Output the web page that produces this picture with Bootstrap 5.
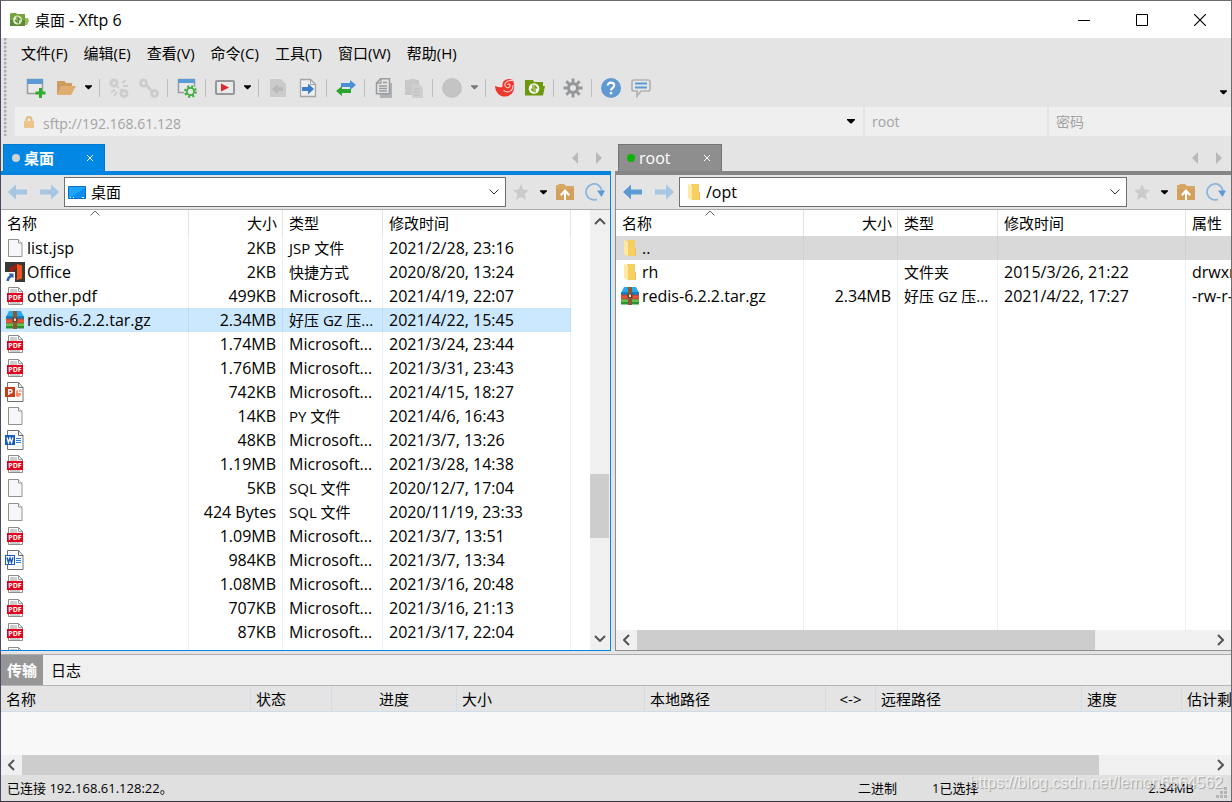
<!DOCTYPE html>
<html lang="zh-CN">
<head>
<meta charset="utf-8">
<meta name="viewport" content="width=device-width, initial-scale=1">
<title>桌面 - Xftp 6</title>
<link href="https://cdn.jsdelivr.net/npm/bootstrap@5.3.0/dist/css/bootstrap.min.css" rel="stylesheet">
<style>
body{font-family:"Open Sans","Noto Sans CJK SC",sans-serif;font-size:15px;line-height:24px;color:#000;background:#e4e4e4}
.win{height:100vh;border:1px solid #6c6b70;border-left-color:#4c4860;border-bottom-color:#38343f}
.win button,.win a{color:inherit;text-decoration:none;font-size:inherit;line-height:inherit}
.win button{border:0;background:none;padding:0}
.win svg{display:block;flex:none}
.latin{font-size:16px}
.titlebar{height:37px;background:#fff;padding-right:2px}
.capbtn{width:58px;height:37px}
.grip{width:3px;margin-left:3px;background:radial-gradient(circle at 1px 1px,#a8a8a8 1px,transparent 2px) 0 0/3px 4px}
.menu{height:30px;padding-left:6px}
.menu a{padding:0 8px}
.tb{height:39px;padding-left:14px}
.tb-btn{width:30px;height:30px}
.tb-drop{width:15px;height:30px}
.tb-sep{width:8px;height:18px;background:linear-gradient(#bdbdbd,#bdbdbd) 3px 0/1px 18px no-repeat}
.addr{height:29px;margin-left:8px;gap:2px}
.addr .cell{background:#efefef;height:29px}
.addr .cell-url{flex:1 1 0}
.addr .cell-side{width:182px;padding-left:7px}
.addr input{border:0;background:none;outline:0;color:#a3a3a3;font-size:14px;min-width:0;padding:0}
.addr input::placeholder{color:#a3a3a3}
.panes{flex:1 1 0;min-height:0;gap:4px}
.pane{min-width:0;min-height:0}
.pane-l{flex:610 1 0}
.pane-r{flex:616 1 0}
.tabs{height:35px;flex:none}
.ptab{height:27px;padding-left:8px;color:#fff}
.ptab .dot{width:8px;height:8px;border-radius:50%}
.ptab .close-x{width:28px;height:27px}
.pane-l .ptab{background:#0288e4;border:1px solid #0078cc;border-bottom:0;width:102px;margin-left:2px}
.pane-r .ptab{background:#8e8e8e;border:1px solid #747474;border-bottom:0;width:104px;margin-left:3px}
.pane-body{flex:1 1 0;min-height:0}
.pane-l .pane-body{border:1px solid #0288e4;border-left:0;border-top:4px solid #0284de}
.pane-r .pane-body{border:1px solid #8e8e8e;border-right:0;border-top:4px solid #868686}
.ptools{height:35px;flex:none;border-bottom:1px solid #adadad;padding-left:1px;background:#e4e4e4}
.ptools .tb-drop{width:14px}
.nav-btn{width:31px;height:30px}
.combo{height:30px;background:#fff;border:1px solid #707070;padding:0 2px}
.combo select{border:0;background:none;outline:0;appearance:none;padding:0;min-width:0;color:#000}
.list{flex:1 1 0;min-height:0;background:#fff}
.ftable{table-layout:fixed;border-collapse:separate;border-spacing:0;height:100%}
.ftable tr{height:24px}
.ftable th,.ftable td{font-weight:400;padding:0 6px;white-space:nowrap;overflow:hidden;border-right:1px solid #e6f1fc}
.ftable td{height:24px;font-size:16px}
.ftable td:nth-child(3){font-size:15px}
.ftable thead th{height:26px;position:relative;border-color:#e2e2e2}
.ftable tr.rest{height:100%}
.ftable .nm{padding:0 0 0 4px}
.ftable .num{text-align:right}
.ftable th.num{padding-right:5px}
.nm div{display:flex;align-items:center;gap:2px;height:24px}
.ftable td.ms{font-size:16px}
.sel td{background:#cce8ff;border-color:#bfdcf6}
.up td{background:#d9d9d9;border-color:#c8d2dc}
.sortmark{position:absolute;top:0;left:calc(50% - 5px)}
.sb{background:#f0f0f0;flex:none}
.sb-thumb{background:#cdcdcd}
.vs{width:20px;padding-right:1px}
.hs{height:20px}
.sb-end{width:21px;padding:0 7px}
.dock{border-top:1px solid #adadad;margin-top:3px}
.dtabs{height:30px;background:#f0f0f0}
.dtabs a{padding:3px 6px 3px 6px}
.dtabs .on{background:#969696;color:#fff!important;font-weight:700}
.dtable{background:#f8f8f8;border-top:1px solid #b5b5b5;height:70px}
.qtable{table-layout:fixed;border-collapse:separate;border-spacing:0;width:1280px}
.qtable th{background:#e4e4e4;font-weight:400;height:26px;padding:0 5px;white-space:nowrap;border-right:1px solid #cfdcea;border-bottom:1px solid #cfdcea}
.status{height:26px;background:#e0e0e0;font-size:13px;padding-left:6px}
.st-mode{width:74px}
.st-info{width:299px;padding-right:37px}
.wm{right:8px;bottom:7px;font:16px/22px "Liberation Sans",sans-serif;color:rgba(255,255,255,.7);text-shadow:1px 1px 1px rgba(120,120,120,.6);pointer-events:none}
.resize{right:3px;bottom:2px}
</style>
</head>
<body>
<svg width="0" height="0" class="position-absolute" aria-hidden="true">
<defs>
<symbol id="caret" viewBox="0 0 8 5"><path d="M0 0h8v1L4.500 4.500h-1L0 1z"/></symbol>
<symbol id="pdf" viewBox="0 0 20 20"><path d="M3.500 1.500h10l4 4v13h-14z" fill="#fff" stroke="#8c8c8c"/><path d="M13.500 1.500v4h4M5 4h7M5 6h7M5 17h10" fill="none" stroke="#999"/><rect x="2" y="7" width="16" height="9" fill="#e3001b"/><text x="10" y="14.200" font-family="Open Sans" font-size="7" font-weight="700" text-anchor="middle" fill="#fff">PDF</text></symbol>
<symbol id="doc" viewBox="0 0 20 20"><path d="M3.500 1.500h10l3.500 3.500v13.500H3.500z" fill="#f5f7f8" stroke="#919191"/><path d="M13.500 1.500V5H17" fill="#fff" stroke="#919191"/></symbol>
<symbol id="word" viewBox="0 0 20 20"><path d="M2.500.500h11l4.500 5v14H2.500z" fill="#fff" stroke="#707070"/><path d="M13.500.500v5H18" fill="none" stroke="#707070"/><path d="M11 8.500h5M11 10.500h5M11 12.500h5" stroke="#2b7cd3"/><rect y="5" width="10" height="10" fill="#185abd"/><path d="M2 7.500l1.500 5 1.500-4.500 1.500 4.500 1.500-5" stroke="#fff" stroke-width="1.300" fill="none"/></symbol>
<symbol id="wordo" viewBox="0 0 20 20"><path d="M2.500.500h11l4.500 5v14H2.500z" fill="#fff" stroke="#707070"/><path d="M13.500.500v5H18" fill="none" stroke="#707070"/><path d="M11 8.500h5M11 10.500h5M11 12.500h5" stroke="#2b7cd3"/><rect x=".5" y="5.500" width="9" height="9" fill="#fff" stroke="#185abd"/><path d="M2 7.500l1.500 5 1.500-4.500 1.500 4.500 1.500-5" stroke="#185abd" stroke-width="1.500" fill="none"/></symbol>
<symbol id="ppt" viewBox="0 0 20 20"><path d="M2.500.500h11l4.500 5v14H2.500z" fill="#fff" stroke="#707070"/><path d="M13.500.500v5H18" fill="none" stroke="#707070"/><path d="M11 9v5a3 3 0 0 0 5-3h-3V8z" fill="#ff8f6b"/><path d="M14 7a3 3 0 0 1 3 3h-3z" fill="#ffb59b"/><rect y="5" width="10" height="10" fill="#c43e1c"/><path d="M3.800 13V7.700h1.700a1.500 1.500 0 0 1 0 3.200H3.800" stroke="#fff" stroke-width="1.400" fill="none"/></symbol>
<symbol id="office" viewBox="0 0 20 20"><path d="M0 0h20v20H0z" fill="#3b3735"/><path d="M5 6l7-4v4L8 8v4H5z" fill="#a61c0c"/><path d="M12 2l5 1.500v13L12 18z" fill="#f0541e"/><path d="M9 15.500l3 1V18z" fill="#c5300f"/><path d="M0 10h10v10H0z" fill="#fff"/><path d="M3.500 11.500H8.500V16.500L7 15C5 16 4 17 4 19H1.500C1.500 16 3 14.500 5 13z" fill="#2c5fa5"/></symbol>
<symbol id="gz" viewBox="0 0 20 20"><path d="M4 1h12l3 6H1z" fill="#29a9e8"/><path d="M1 6h18v3H1z" fill="#1581c0"/><path d="M1 9h18v4H1z" fill="#e2573a"/><path d="M1 13h18v3H1z" fill="#63c14a"/><path d="M1 16h18v2.500H1z" fill="#2f8f38"/><path d="M1 9h18M1 13h18" stroke="#a33" stroke-width=".6"/><path d="M8 1h4v18H8z" fill="#8b5a32"/><rect x="7.500" y="7.500" width="5" height="4.500" fill="#5a4436"/><rect x="9" y="8.500" width="2" height="2.500" fill="#ffe0b0"/></symbol>
<symbol id="fold" viewBox="0 0 14 18"><path d="M4 1h8v13l1 1v2H4z" fill="#f5cf63"/><path d="M12 9h1v7h-1z" fill="#eec04f"/><path d="M1 1l4 2v14l-4-2z" fill="#ffe9a2"/></symbol>
<symbol id="back" viewBox="0 0 20 16"><path d="M0 8l8-7.500v5h11v5H8v5z"/></symbol>
<symbol id="fwd" viewBox="0 0 20 16"><path d="M20 8l-8-7.500v5H1v5h11v5z"/></symbol>
<symbol id="chev" viewBox="0 0 10 6"><path d="M.500.500L5 5 9.500.500" fill="none" stroke="#333"/></symbol>
<symbol id="star" viewBox="0 0 16 16"><path d="M8 0l2.300 5.500L16 6l-4.300 4 1.300 6-5-3.200L3 16l1.300-6L0 6l5.700-.5z" fill="#cbcbcb"/></symbol>
<symbol id="upf" viewBox="0 0 18 16"><path d="M0 1h2l1-1h5l2 2h8v14H0z" fill="#d9a765"/><path d="M0 5h18v11H0z" fill="#d3a05c"/><path d="M4 10.500L9 5l5 5.500-1.500 1.500L10 9.500V16H8V9.500L5.500 12z" fill="#fff"/></symbol>
<symbol id="refr" viewBox="0 0 20 18"><path d="M12 16.300A8 8 0 1 1 17 8" fill="none" stroke="#8cb6dd" stroke-width="1.800"/><path d="M12 7.500h8l-3.500 6.500z" fill="#5b9bd5"/></symbol>
<symbol id="close" viewBox="0 0 8 8"><path d="M1 1l6 6M7 1L1 7" stroke="#fff" fill="none"/></symbol>
<symbol id="gear" viewBox="0 0 20 20"><path d="M10 0.500v19M.500 10h19M3.300 3.300l13.400 13.400M16.700 3.300L3.300 16.700" stroke-width="2.800"/><circle cx="10" cy="10" r="6" stroke="none"/></symbol>
<symbol id="sl" viewBox="0 0 7 12"><path d="M6 1L1 6l5 5" fill="none" stroke="#555" stroke-width="2"/></symbol>
<symbol id="sr" viewBox="0 0 7 12"><path d="M1 1l5 5-5 5" fill="none" stroke="#555" stroke-width="2"/></symbol>
</defs>
</svg>

<div class="win d-flex flex-column position-relative overflow-hidden">
  <header class="titlebar d-flex align-items-center">
    <svg class="ms-2" width="22" height="16" viewBox="0 0 22 16"><path d="M1 2l1-1h5l1 1h8v12H1z" fill="#78a33c"/><path d="M1 8h15v6H1z" fill="#5d8a35"/><path d="M16 6h3l1 3-2 4h-2z" fill="#9bbd63"/><circle cx="8.500" cy="8" r="4.500" fill="#dfeccb"/><path d="M8 4.500v5.500L6 8M9.500 11.500V6l2 2" stroke="#5d8a35" stroke-width="1.200" fill="none"/></svg>
    <span class="ms-1 flex-grow-1">桌面 <span class="latin">- Xftp 6</span></span>
    <button class="capbtn d-flex align-items-center justify-content-center" aria-label="最小化"><svg width="12" height="12"><path d="M0 6.500h12" stroke="#000"/></svg></button>
    <button class="capbtn d-flex align-items-center justify-content-center" aria-label="最大化"><svg width="12" height="12"><path d="M.5.500h11v11H.500z" fill="none" stroke="#000"/></svg></button>
    <button class="capbtn d-flex align-items-center justify-content-center" aria-label="关闭"><svg width="12" height="12"><path d="M0 0l12 12M12 0L0 12" stroke="#000" stroke-width="1.200"/></svg></button>
  </header>

  <div class="d-flex">
    <div class="grip"></div>
    <div class="flex-grow-1">
      <nav class="menu d-flex align-items-center">
        <a href="#">文件(F)</a><a href="#">编辑(E)</a><a href="#">查看(V)</a><a href="#">命令(C)</a><a href="#">工具(T)</a><a href="#">窗口(W)</a><a href="#">帮助(H)</a>
      </nav>
      <div class="tb d-flex align-items-center">
        <button class="tb-btn d-flex align-items-center justify-content-center" aria-label="新建"><svg width="20" height="20"><path d="M1.500 1.500h15v14h-15z" fill="#e9e9e9" stroke="#9a9da1" stroke-width="1.500"/><path d="M1 1h16v5H1z" fill="#5b9bd5"/><path d="M14.500 10v10M9.500 15h10" stroke="#2eac2e" stroke-width="3"/></svg></button>
        <button class="tb-btn d-flex align-items-center justify-content-center" aria-label="打开"><svg width="20" height="20"><path d="M1 3h7l2 2h6v5H1z" fill="#c8935a"/><path d="M1 17V3h7l2 2h6v3H6z" fill="#cf9c60"/><path d="M5 8h15l-5 9H1z" fill="#dfae6e"/></svg></button>
        <button class="tb-drop d-flex align-items-center justify-content-center" aria-label="打开列表"><svg width="7" height="5"><use href="#caret"/></svg></button>
        <span class="tb-sep"></span>
        <button class="tb-btn d-flex align-items-center justify-content-center" aria-label="断开"><svg width="20" height="20" fill="none" stroke="#cdcdcd" stroke-width="3"><circle cx="5" cy="5" r="3"/><circle cx="15" cy="15.500" r="3"/><path d="M8 8l2 2M11 13l2-2M13 5l4-3M14 8h5M2 14l4-2M5 18l3-4" stroke-width="2"/></svg></button>
        <button class="tb-btn d-flex align-items-center justify-content-center" aria-label="重新连接"><svg width="20" height="20" fill="none" stroke="#cdcdcd" stroke-width="3"><circle cx="4.500" cy="5" r="3"/><circle cx="15.500" cy="15.500" r="3"/><path d="M7 7l6 6"/></svg></button>
        <span class="tb-sep"></span>
        <button class="tb-btn d-flex align-items-center justify-content-center" aria-label="属性"><svg width="20" height="20"><path d="M1.500 1.500h16v13h-16z" fill="#e9e9e9" stroke="#9a9da1" stroke-width="1.500"/><path d="M1 1h17v4H1z" fill="#5b9bd5"/><circle cx="13.500" cy="13.500" r="6.500" fill="#e6e6e6"/><circle cx="13.500" cy="13.500" r="5.200" fill="none" stroke="#43ad43" stroke-width="2.400" stroke-dasharray="2.100 2"/><circle cx="13.500" cy="13.500" r="3.600" fill="none" stroke="#43ad43" stroke-width="1.800"/></svg></button>
        <span class="tb-sep"></span>
        <button class="tb-btn d-flex align-items-center justify-content-center" aria-label="运行"><svg width="20" height="16"><rect x="1" y="1" width="18" height="13" rx="1" fill="#e9e9e9" stroke="#95989b" stroke-width="2"/><path d="M6 3.500v8l8-4z" fill="#e0262c"/></svg></button>
        <button class="tb-drop d-flex align-items-center justify-content-center" aria-label="运行列表"><svg width="7" height="5"><use href="#caret"/></svg></button>
        <span class="tb-sep"></span>
        <button class="tb-btn d-flex align-items-center justify-content-center" aria-label="下载"><svg width="20" height="20"><path d="M2 1h11l5 5v13H2z" fill="#cbcbcb"/><path d="M4 11l6-5v3h5v4h-5v3z" fill="#b9b9b9"/></svg></button>
        <button class="tb-btn d-flex align-items-center justify-content-center" aria-label="上传"><svg width="20" height="20"><path d="M2.500 1.500h10l5 5v12h-15z" fill="#eee" stroke="#a5a5a5" stroke-width="1.300"/><path d="M12.500 1.500v5h5" fill="none" stroke="#a5a5a5"/><path d="M16 11l-6-5.500v3.500H4v4h6v3.500z" fill="#3d7ecb"/></svg></button>
        <span class="tb-sep"></span>
        <button class="tb-btn d-flex align-items-center justify-content-center" aria-label="同步"><svg width="20" height="16"><path d="M20 5l-6-5v3H5v4h9v3z" fill="#4b8fd6"/><path d="M0 11l6-5v3h9v4H6v3z" fill="#2ba52b"/></svg></button>
        <span class="tb-sep"></span>
        <button class="tb-btn d-flex align-items-center justify-content-center" aria-label="复制"><svg width="20" height="20"><path d="M6 5h12v15H6z" fill="#b0b3b5"/><path d="M6.500.800h9v15h-13V5z" fill="#e4e4e4" stroke="#999c9f" stroke-width="1.500"/><path d="M2 5h5V1M5 8h8M5 10.500h8M5 13h8M9 4.500h4" stroke="#999c9f" fill="none" stroke-width="1.300"/></svg></button>
        <button class="tb-btn d-flex align-items-center justify-content-center" aria-label="粘贴"><svg width="20" height="20"><path d="M1 2h4l1-1h5l1 1h3v4h-7v11H1z" fill="#c8c8c8"/><path d="M8 6h7l4 4v10H8z" fill="#cfcfcf"/><path d="M10 11h6M10 14h6M10 17h6" stroke="#bdbdbd"/></svg></button>
        <span class="tb-sep"></span>
        <button class="tb-btn d-flex align-items-center justify-content-center" aria-label="传输类型"><svg width="20" height="20"><circle cx="10" cy="10" r="10" fill="#c3c3c3"/></svg></button>
        <button class="tb-drop d-flex align-items-center justify-content-center" aria-label="传输类型列表"><svg width="7" height="5" fill="#777"><use href="#caret"/></svg></button>
        <span class="tb-sep"></span>
        <button class="tb-btn d-flex align-items-center justify-content-center" aria-label="Xshell"><svg width="20" height="20"><path d="M0 8.500C1 16 6 19 11 18.500 17 17.500 20 13 19 6L18 2 15 1C10 1 7 3.500 7.500 7.500 8 10 5 9.500 0 8z" fill="#ee382e"/><path d="M18 2.500c-6-.8-9.500 3-7.500 6 1.600 2.400 5.300.7 4.500-1.700-.5-1.100-2-1-2.200 0M18 7c.5 6-5 8.500-9.500 5.500" stroke="#f8d0cc" fill="none" stroke-width="1.100"/></svg></button>
        <button class="tb-btn d-flex align-items-center justify-content-center" aria-label="Xftp"><svg width="20" height="18"><path d="M0 1h8l1 2h9v4h2l-2 9.500H0z" fill="#6a9a0c"/><circle cx="9" cy="9.500" r="5.300" fill="#fff"/><path d="M8 5.500v6.500L6 10M10 13.500V7l2.300 2.500" stroke="#6a9a0c" stroke-width="1.300" fill="none"/></svg></button>
        <span class="tb-sep"></span>
        <button class="tb-btn d-flex align-items-center justify-content-center" aria-label="选项"><svg width="20" height="20" fill="#94979a" stroke="#94979a"><use href="#gear"/><circle cx="10" cy="10" r="3" fill="#e4e4e4" stroke="none"/></svg></button>
        <span class="tb-sep"></span>
        <button class="tb-btn d-flex align-items-center justify-content-center" aria-label="帮助"><svg width="20" height="20"><circle cx="10" cy="10" r="10" fill="#6199d2"/><path d="M6.800 7.500c0-4 6.400-3.800 6.400 0 0 2.300-3.200 2.300-3.200 5" stroke="#fff" stroke-width="2.200" fill="none"/><path d="M8.800 14h2.400v2.300H8.800z" fill="#fff"/></svg></button>
        <button class="tb-btn d-flex align-items-center justify-content-center" aria-label="反馈"><svg width="20" height="20"><path d="M3 2h14q2 0 2 2v7q0 2-2 2h-7l-4 5v-5H3q-2 0-2-2V4q0-2 2-2z" fill="#e6e6e6" stroke="#b0b3b6" stroke-width="1.700"/><path d="M4 5.500h12M4 9.500h12" stroke="#5b9bd5" stroke-width="1.800"/></svg></button>
        <button class="tb-drop d-flex align-items-end justify-content-center ms-auto pb-2" aria-label="更多"><svg width="7" height="5"><use href="#caret"/></svg></button>
      </div>
      <div class="addr d-flex">
        <div class="cell cell-url d-flex align-items-center pe-2">
          <svg class="ms-2" width="12" height="12"><path d="M3.500 6V3.500a2.500 2.500 0 0 1 5 0V6" fill="none" stroke="#e6b97c" stroke-width="2"/><path d="M1 5h10v7H1z" fill="#edc48c"/></svg>
          <input class="flex-grow-1 ms-2 pt-1" type="text" aria-label="主机地址" value="sftp://192.168.61.128">
          <button aria-label="地址列表"><svg width="8" height="5"><use href="#caret"/></svg></button>
        </div>
        <div class="cell cell-side d-flex"><input class="w-100" type="text" aria-label="用户名" value="root"></div>
        <div class="cell cell-side d-flex"><input class="w-100" type="password" aria-label="密码" placeholder="密码"></div>
      </div>
    </div>
  </div>

  <main class="panes d-flex">
    <section class="pane pane-l d-flex flex-column">
      <div class="tabs d-flex align-items-end">
        <div class="ptab d-flex align-items-center"><span class="dot" style="background:#cfd3d6"></span><a href="#" class="fw-bold ms-1 flex-grow-1">桌面</a><button class="close-x d-flex align-items-center justify-content-center" aria-label="关闭标签"><svg width="8" height="8"><use href="#close"/></svg></button></div>
        <div class="ms-auto d-flex align-self-center pt-2 pe-2"><button aria-label="上一个"><svg width="8" height="12"><path d="M7 0v12L1 6z" fill="#b9b9b9"/></svg></button><button class="ms-3" aria-label="下一个"><svg width="8" height="12"><path d="M1 0v12l6-6z" fill="#b9b9b9"/></svg></button></div>
      </div>
      <div class="pane-body d-flex flex-column">
        <div class="ptools d-flex align-items-center">
          <button class="nav-btn d-flex align-items-center justify-content-center" aria-label="后退"><svg width="20" height="16" fill="#a6c5e2"><use href="#back"/></svg></button>
          <button class="nav-btn d-flex align-items-center justify-content-center" aria-label="前进"><svg width="20" height="16" fill="#a6c5e2"><use href="#fwd"/></svg></button>
          <div class="combo d-flex align-items-center flex-grow-1">
            <svg width="20" height="15"><path d="M1.500 1.500h17v12h-17z" fill="#1ea5fb" stroke="#0b6fbf"/><path d="M2 13L18 3v10z" fill="#0c8ff0"/><path d="M3 12.500h1M6 12.500h1M15 12.500h2" stroke="#fff"/></svg>
            <select class="flex-grow-1 ms-1" aria-label="本地路径"><option>桌面</option></select>
            <svg class="me-1" width="10" height="6"><use href="#chev"/></svg>
          </div>
          <button class="tb-btn d-flex align-items-center justify-content-center" aria-label="收藏"><svg width="16" height="16"><use href="#star"/></svg></button>
          <button class="tb-drop d-flex align-items-center justify-content-center" aria-label="收藏列表"><svg width="7" height="5"><use href="#caret"/></svg></button>
          <button class="tb-btn d-flex align-items-center justify-content-center" aria-label="上级目录"><svg width="18" height="16"><use href="#upf"/></svg></button>
          <button class="tb-btn d-flex align-items-center justify-content-center" aria-label="刷新"><svg width="20" height="18"><use href="#refr"/></svg></button>
        </div>
        <div class="list d-flex overflow-hidden">
          <div class="flex-grow-1 overflow-hidden">
          <table class="ftable" style="width:570px">
            <colgroup><col style="width:188px"><col style="width:94px"><col style="width:100px"><col style="width:188px"></colgroup>
            <thead><tr><th>名称<svg class="sortmark" width="10" height="6"><path d="M.5 5.500L5 1l4.500 4.500" fill="none" stroke="#666"/></svg></th><th class="num">大小</th><th>类型</th><th>修改时间</th></tr></thead>
            <tbody>
            <tr><td class="nm"><div><svg width="20" height="20"><use href="#doc"/></svg>list.jsp</div></td><td class="num">2KB</td><td>JSP 文件</td><td>2021/2/28, 23:16</td></tr>
            <tr><td class="nm"><div><svg width="20" height="20"><use href="#office"/></svg>Office</div></td><td class="num">2KB</td><td>快捷方式</td><td>2020/8/20, 13:24</td></tr>
            <tr><td class="nm"><div><svg width="20" height="20"><use href="#pdf"/></svg>other.pdf</div></td><td class="num">499KB</td><td class="ms">Microsoft...</td><td>2021/4/19, 22:07</td></tr>
            <tr class="sel"><td class="nm"><div><svg width="20" height="20"><use href="#gz"/></svg>redis-6.2.2.tar.gz</div></td><td class="num">2.34MB</td><td>好压 GZ 压...</td><td>2021/4/22, 15:45</td></tr>
            <tr><td class="nm"><div><svg width="20" height="20"><use href="#pdf"/></svg></div></td><td class="num">1.74MB</td><td class="ms">Microsoft...</td><td>2021/3/24, 23:44</td></tr>
            <tr><td class="nm"><div><svg width="20" height="20"><use href="#pdf"/></svg></div></td><td class="num">1.76MB</td><td class="ms">Microsoft...</td><td>2021/3/31, 23:43</td></tr>
            <tr><td class="nm"><div><svg width="20" height="20"><use href="#ppt"/></svg></div></td><td class="num">742KB</td><td class="ms">Microsoft...</td><td>2021/4/15, 18:27</td></tr>
            <tr><td class="nm"><div><svg width="20" height="20"><use href="#doc"/></svg></div></td><td class="num">14KB</td><td>PY 文件</td><td>2021/4/6, 16:43</td></tr>
            <tr><td class="nm"><div><svg width="20" height="20"><use href="#word"/></svg></div></td><td class="num">48KB</td><td class="ms">Microsoft...</td><td>2021/3/7, 13:26</td></tr>
            <tr><td class="nm"><div><svg width="20" height="20"><use href="#pdf"/></svg></div></td><td class="num">1.19MB</td><td class="ms">Microsoft...</td><td>2021/3/28, 14:38</td></tr>
            <tr><td class="nm"><div><svg width="20" height="20"><use href="#doc"/></svg></div></td><td class="num">5KB</td><td>SQL 文件</td><td>2020/12/7, 17:04</td></tr>
            <tr><td class="nm"><div><svg width="20" height="20"><use href="#doc"/></svg></div></td><td class="num">424 Bytes</td><td>SQL 文件</td><td>2020/11/19, 23:33</td></tr>
            <tr><td class="nm"><div><svg width="20" height="20"><use href="#pdf"/></svg></div></td><td class="num">1.09MB</td><td class="ms">Microsoft...</td><td>2021/3/7, 13:51</td></tr>
            <tr><td class="nm"><div><svg width="20" height="20"><use href="#wordo"/></svg></div></td><td class="num">984KB</td><td class="ms">Microsoft...</td><td>2021/3/7, 13:34</td></tr>
            <tr><td class="nm"><div><svg width="20" height="20"><use href="#pdf"/></svg></div></td><td class="num">1.08MB</td><td class="ms">Microsoft...</td><td>2021/3/16, 20:48</td></tr>
            <tr><td class="nm"><div><svg width="20" height="20"><use href="#pdf"/></svg></div></td><td class="num">707KB</td><td class="ms">Microsoft...</td><td>2021/3/16, 21:13</td></tr>
            <tr><td class="nm"><div><svg width="20" height="20"><use href="#pdf"/></svg></div></td><td class="num">87KB</td><td class="ms">Microsoft...</td><td>2021/3/17, 22:04</td></tr>
            <tr><td class="nm"><div><svg width="20" height="20"><use href="#pdf"/></svg></div></td><td></td><td></td><td></td></tr>
            </tbody>
          </table>
          </div>
          <div class="sb vs d-flex flex-column align-items-center">
            <svg class="mt-2" width="12" height="7"><path d="M1 6l5-5 5 5" fill="none" stroke="#555" stroke-width="2"/></svg>
            <div style="flex:249 1 0"></div><div class="sb-thumb w-100" style="flex:64 1 0"></div><div style="flex:97 1 0"></div>
            <svg class="mb-2" width="12" height="7"><path d="M1 1l5 5 5-5" fill="none" stroke="#555" stroke-width="2"/></svg>
          </div>
        </div>
      </div>
    </section>

    <section class="pane pane-r d-flex flex-column">
      <div class="tabs d-flex align-items-end">
        <div class="ptab d-flex align-items-center"><span class="dot" style="background:#0db30d"></span><a href="#" class="ms-1 flex-grow-1"><span class="latin">root</span></a><button class="close-x d-flex align-items-center justify-content-center" aria-label="关闭标签"><svg width="8" height="8"><use href="#close"/></svg></button></div>
        <div class="ms-auto d-flex align-self-center pt-2 pe-2"><button aria-label="上一个"><svg width="8" height="12"><path d="M7 0v12L1 6z" fill="#b9b9b9"/></svg></button><button class="ms-3" aria-label="下一个"><svg width="8" height="12"><path d="M1 0v12l6-6z" fill="#b9b9b9"/></svg></button></div>
      </div>
      <div class="pane-body d-flex flex-column">
        <div class="ptools d-flex align-items-center">
          <button class="nav-btn d-flex align-items-center justify-content-center" aria-label="后退"><svg width="20" height="16" fill="#5b9bd5"><use href="#back"/></svg></button>
          <button class="nav-btn d-flex align-items-center justify-content-center" aria-label="前进"><svg width="20" height="16" fill="#a6c5e2"><use href="#fwd"/></svg></button>
          <div class="combo d-flex align-items-center flex-grow-1">
            <svg class="ms-1" width="16" height="18"><use href="#fold"/></svg>
            <select class="flex-grow-1 ms-1 latin" aria-label="远程路径"><option>/opt</option></select>
            <svg class="me-1" width="10" height="6"><use href="#chev"/></svg>
          </div>
          <button class="tb-btn d-flex align-items-center justify-content-center" aria-label="收藏"><svg width="16" height="16"><use href="#star"/></svg></button>
          <button class="tb-drop d-flex align-items-center justify-content-center" aria-label="收藏列表"><svg width="7" height="5"><use href="#caret"/></svg></button>
          <button class="tb-btn d-flex align-items-center justify-content-center" aria-label="上级目录"><svg width="18" height="16"><use href="#upf"/></svg></button>
          <button class="tb-btn d-flex align-items-center justify-content-center" aria-label="刷新"><svg width="20" height="18"><use href="#refr"/></svg></button>
        </div>
        <div class="list overflow-hidden">
          <table class="ftable" style="width:670px">
            <colgroup><col style="width:188px"><col style="width:94px"><col style="width:100px"><col style="width:188px"><col style="width:100px"></colgroup>
            <thead><tr><th>名称<svg class="sortmark" width="10" height="6"><path d="M.5 5.500L5 1l4.500 4.500" fill="none" stroke="#666"/></svg></th><th class="num">大小</th><th>类型</th><th>修改时间</th><th>属性</th></tr></thead>
            <tbody>
            <tr class="up"><td class="nm"><div><svg width="20" height="18"><use href="#fold"/></svg>..</div></td><td></td><td></td><td></td><td></td></tr>
            <tr><td class="nm"><div><svg width="20" height="18"><use href="#fold"/></svg>rh</div></td><td></td><td>文件夹</td><td>2015/3/26, 21:22</td><td>drwxr-xr-x</td></tr>
            <tr><td class="nm"><div><svg width="20" height="20"><use href="#gz"/></svg>redis-6.2.2.tar.gz</div></td><td class="num">2.34MB</td><td>好压 GZ 压...</td><td>2021/4/22, 17:27</td><td>-rw-r--r--</td></tr>
            <tr class="rest"><td></td><td></td><td></td><td></td><td></td></tr>
            </tbody>
          </table>
        </div>
        <div class="sb hs d-flex align-items-center">
          <div class="sb-end"><svg width="7" height="12"><use href="#sl"/></svg></div>
          <div class="sb-thumb h-100" style="flex:458 1 0"></div><div style="flex:115 1 0"></div>
          <div class="sb-end"><svg width="7" height="12"><use href="#sr"/></svg></div>
        </div>
      </div>
    </section>
  </main>

  <section class="dock">
    <div class="dtabs d-flex"><a href="#" class="on">传输</a><a href="#" class="ps-2">日志</a></div>
    <div class="dtable overflow-hidden">
      <table class="qtable">
        <colgroup><col style="width:250px"><col style="width:81px"><col style="width:125px"><col style="width:188px"><col style="width:181px"><col style="width:50px"><col style="width:206px"><col style="width:100px"><col style="width:99px"></colgroup>
        <thead><tr><th>名称</th><th>状态</th><th class="text-center">进度</th><th>大小</th><th>本地路径</th><th class="text-center">&lt;-&gt;</th><th>远程路径</th><th>速度</th><th>估计剩余时间</th></tr></thead>
      </table>
    </div>
    <div class="sb hs d-flex align-items-center">
      <div class="sb-end"><svg width="7" height="12"><use href="#sl"/></svg></div>
      <div class="sb-thumb h-100" style="flex:1077 1 0"></div><div style="flex:111 1 0"></div>
      <div class="sb-end"><svg width="7" height="12"><use href="#sr"/></svg></div>
    </div>
  </section>
  <footer class="status d-flex align-items-center">
    <span class="flex-grow-1">已连接 192.168.61.128:22。</span>
    <span class="st-mode">二进制</span>
    <span class="st-info d-flex justify-content-between"><span>1已选择</span><span>2.34MB</span></span>
  </footer>
  <svg class="resize position-absolute" width="12" height="12" fill="#b5b5b5"><path d="M8 0h3v3H8zM8 4h3v3H8zM8 8h3v3H8zM4 4h3v3H4zM4 8h3v3H4zM0 8h3v3H0z"/></svg>
  <div class="wm position-absolute">https://blog.csdn.net/lemon6564562</div>
</div>
<script src="https://cdn.jsdelivr.net/npm/bootstrap@5.3.0/dist/js/bootstrap.bundle.min.js"></script>
</body>
</html>
